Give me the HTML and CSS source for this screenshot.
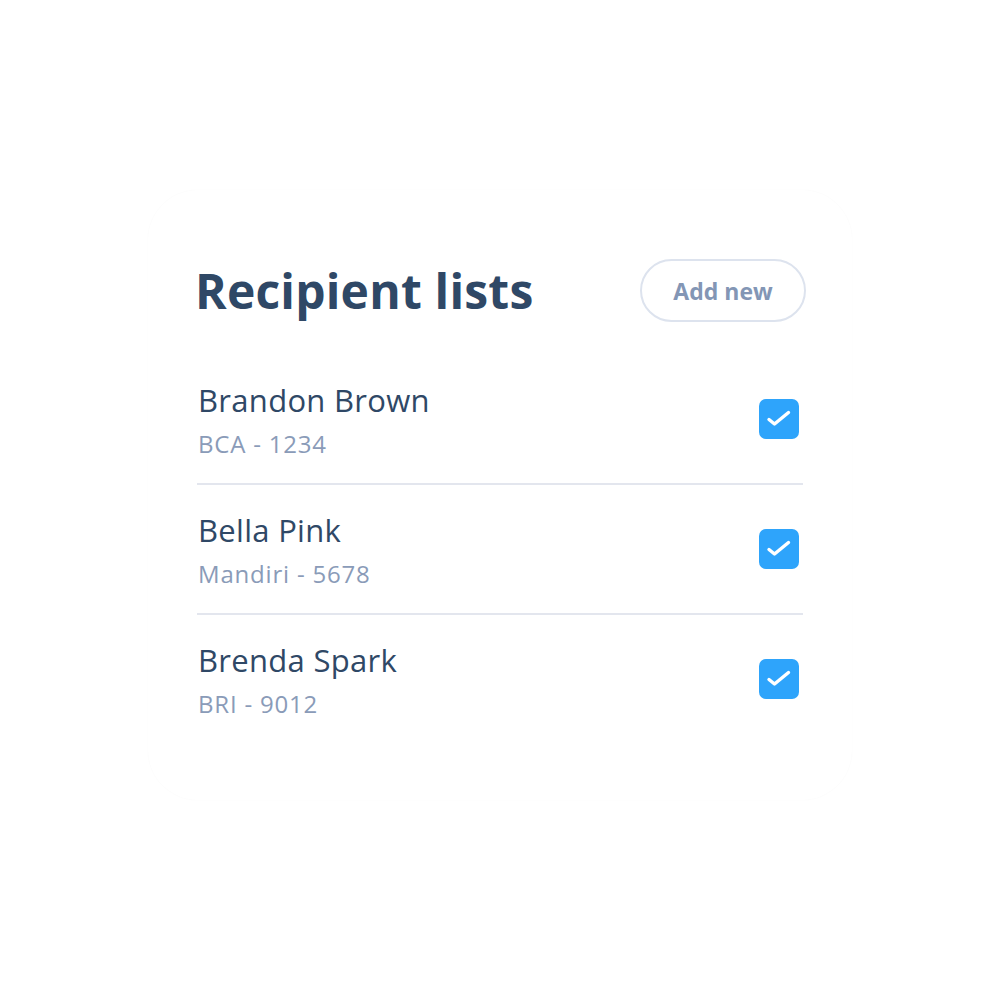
FILE: index.html
```
<!DOCTYPE html>
<html>
<head>
<meta charset="utf-8">
<link rel="stylesheet" href="styles.css">
</head>
<body>
<div class="card">
  <div class="inner">
    <div class="header">
      <h1 class="title">Recipient lists</h1>
      <button class="add-btn">Add new</button>
    </div>
    <div class="list">
      <div class="row">
        <div class="info">
          <div class="name">Brandon Brown</div>
          <div class="account">BCA - 1234</div>
        </div>
        <div class="check"><svg width="40" height="40" viewBox="0 0 40 40"><path d="M10 20.5 L15.5 25 L29.5 13.5" fill="none" stroke="#fff" stroke-width="3.4" stroke-linecap="round" stroke-linejoin="round"/></svg></div>
      </div>
      <div class="row">
        <div class="info">
          <div class="name">Bella Pink</div>
          <div class="account">Mandiri - 5678</div>
        </div>
        <div class="check"><svg width="40" height="40" viewBox="0 0 40 40"><path d="M10 20.5 L15.5 25 L29.5 13.5" fill="none" stroke="#fff" stroke-width="3.4" stroke-linecap="round" stroke-linejoin="round"/></svg></div>
      </div>
      <div class="row last">
        <div class="info">
          <div class="name">Brenda Spark</div>
          <div class="account">BRI - 9012</div>
        </div>
        <div class="check"><svg width="40" height="40" viewBox="0 0 40 40"><path d="M10 20.5 L15.5 25 L29.5 13.5" fill="none" stroke="#fff" stroke-width="3.4" stroke-linecap="round" stroke-linejoin="round"/></svg></div>
      </div>
    </div>
  </div>
</div>
</body>
</html>
```
FILE: styles.css
```
html, body {
  margin: 0;
  padding: 0;
  background: #ffffff;
}
body {
  font-family: "Open Sans", "Noto Sans", sans-serif;
  width: 1001px;
  height: 1001px;
  overflow: hidden;
}
.card {
  box-sizing: border-box;
  width: 704px;
  height: 610px;
  margin: 190px 0 0 148px;
  border-radius: 50px;
  box-shadow: 0 0 1.5px rgba(0, 0, 0, 0.035);
  padding: 69px 49px 0 49px;
}
.inner {
  width: 606px;
}
.header {
  display: flex;
  align-items: center;
  justify-content: space-between;
  height: 63px;
  margin-bottom: 33px;
}
.title {
  margin: 0 0 0 -2px;
  font-size: 48px;
  font-weight: 700;
  color: #2f4866;
  letter-spacing: 0.2px;
  line-height: 63px;
}
.add-btn {
  box-sizing: border-box;
  width: 166px;
  height: 63px;
  margin-right: -3px;
  border: 2px solid #dde3ee;
  border-radius: 32px;
  background: #fff;
  font-family: inherit;
  font-size: 23px;
  font-weight: 700;
  color: #8396b5;
  padding: 0;
}
.row {
  display: flex;
  align-items: center;
  justify-content: space-between;
  height: 128px;
  border-bottom: 2px solid #e3e6ee;
  box-sizing: content-box;
}
.row.last {
  border-bottom: none;
}
.info {
  padding-left: 1px;
  display: flex;
  flex-direction: column;
}
.name {
  font-size: 31px;
  line-height: 40px;
  letter-spacing: 0.3px;
  color: #2f4866;
}
.account {
  margin-top: 9px;
  font-size: 24px;
  line-height: 30px;
  letter-spacing: 0.8px;
  color: #8a9bb8;
}
.check {
  width: 40px;
  height: 40px;
  border-radius: 7px;
  background: #2ea4fb;
  margin-right: 4px;
}
.check svg {
  display: block;
}
```
